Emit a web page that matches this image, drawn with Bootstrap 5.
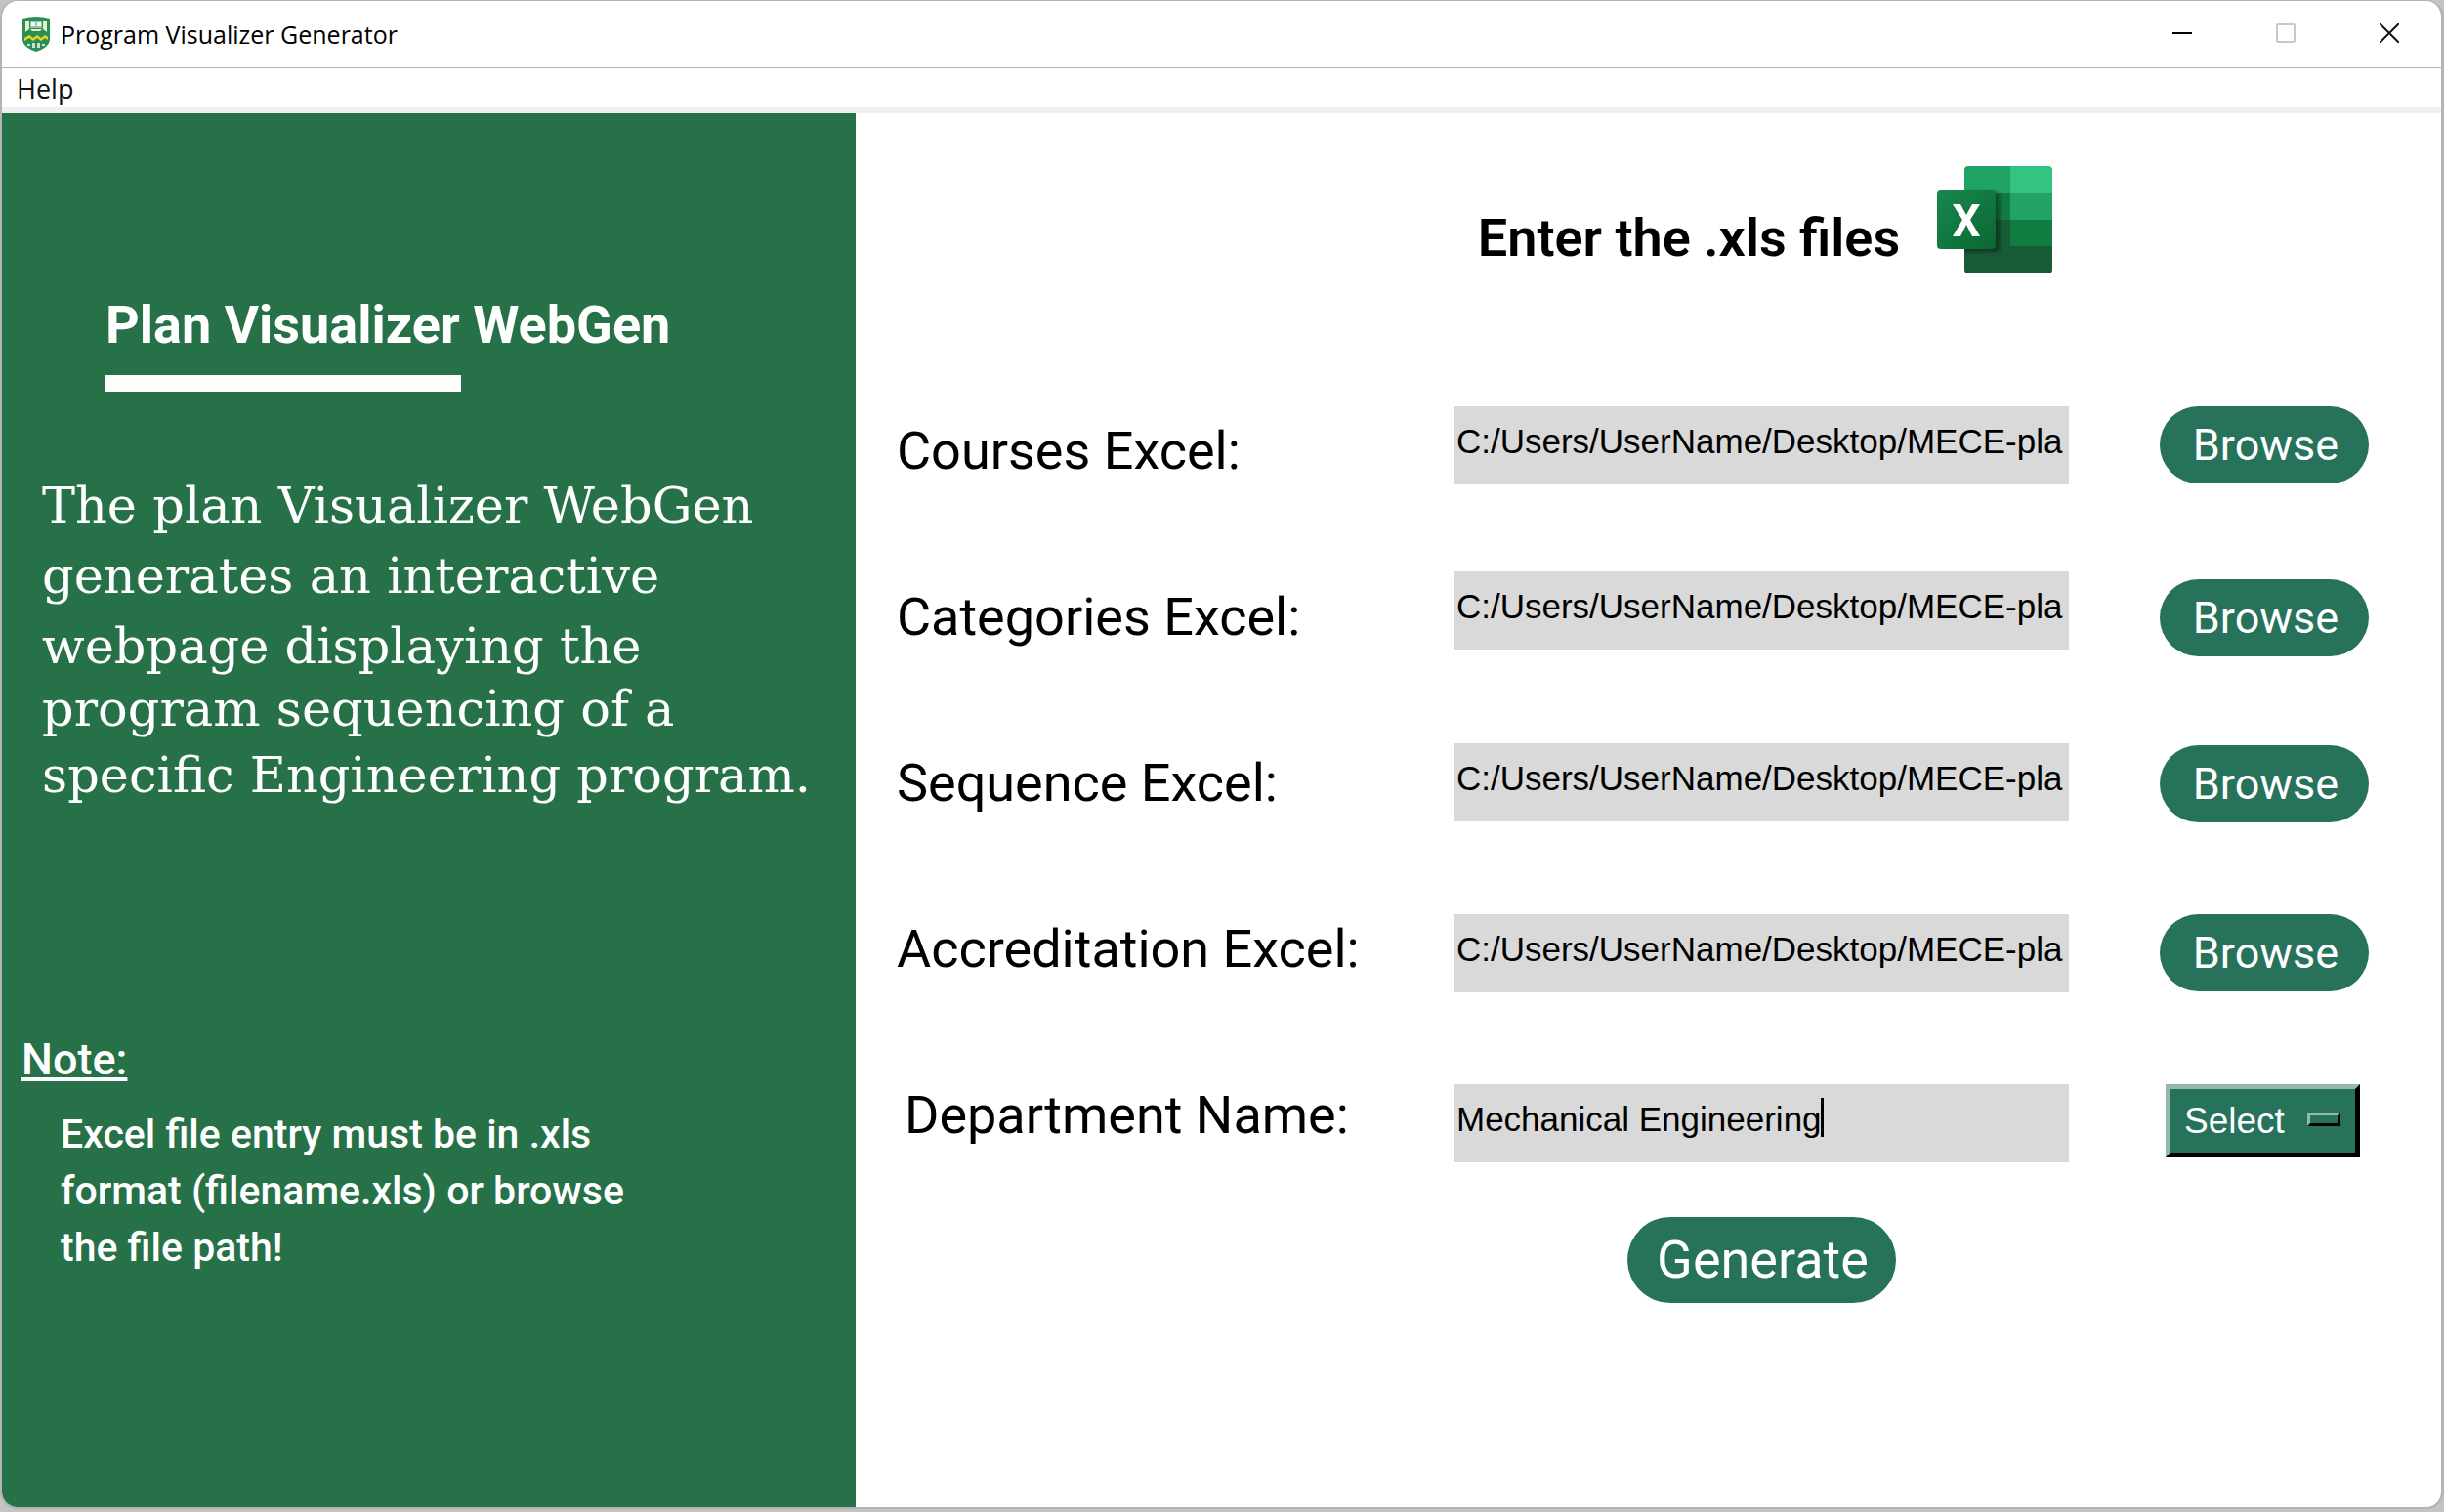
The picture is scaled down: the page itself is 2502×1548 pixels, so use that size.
<!DOCTYPE html>
<html lang="en">
<head>
<meta charset="utf-8">
<meta name="viewport" content="width=device-width, initial-scale=1">
<title>Program Visualizer Generator</title>
<link href="https://cdn.jsdelivr.net/npm/bootstrap@5.3.0/dist/css/bootstrap.min.css" rel="stylesheet">
<script src="https://cdn.jsdelivr.net/npm/bootstrap@5.3.0/dist/js/bootstrap.bundle.min.js"></script>
<style>
  :root { --panel: #277149; --action: #27725b; --field: #d9d9d9; }
  body { background: #c4c4c4; font-family: Roboto, "Liberation Sans", sans-serif; color: #000; }
  .app-window { min-height: calc(100vh - 3px); border: solid #b4b4b4; border-width: 1px 3px 2px 2px; border-radius: 18px; overflow: hidden; background: #fff; }
  .title-bar { height: 68px; font: 25px/68px "Open Sans", sans-serif; padding-left: 20px; gap: 10px; }
  .title-bar button { width: 106px; height: 62px; }
  .menu-strip { height: 47px; border-top: 1px solid #b4b4b4; border-bottom: 6px solid #f0f0f0; padding-left: 15px; }
  .menu-strip a { font: 27px/42px "Open Sans", sans-serif; color: #111; }
  .side-panel { width: 35%; background: var(--panel); color: #fff; }
  .side-title { font-size: 54px; line-height: 64px; font-weight: 700; margin: 185px 0 0 106px; }
  .side-rule { width: 364px; height: 17px; margin: 19px 0 0 106px; background: #fffdfb; }
  .intro { font-family: "DejaVu Serif", serif; font-size: 51px; margin: 81px 0 0 41px; }
  .intro-top { line-height: 72px; }
  .intro-end { line-height: 68px; margin-top: -6px; }
  .note-head { font-size: 45px; line-height: 52px; font-weight: 500; margin: 231px 0 0 20px; }
  .note-body { font-size: 41px; line-height: 58px; font-weight: 500; margin: 21px 0 0 60px; }
  .work-grid { display: grid; grid-template-columns: minmax(0, 1fr) 630px 214px; column-gap: 93px; padding: 54px 74px 0 42px; align-content: start; }
  .mid { grid-column: 2; gap: 38px; }
  .work-title { font-size: 54px; line-height: 64px; font-weight: 600; padding-top: 42px; }
  .stack { display: grid; margin-top: 136px; align-content: start; justify-items: start; }
  .labels { grid-column: 1; grid-template-rows: repeat(5, 170px); padding-top: 14px; }
  .labels label { font-size: 54px; line-height: 64px; }
  .fields { grid-template-rows: 169px 176px 175px 174px 80px; justify-items: stretch; }
  .fields input { height: 80px; border: 0; border-radius: 0; background: var(--field); font: 35px/46px "Liberation Sans", sans-serif; padding: 0 2px 8px 3px; color: #000; }
  .fields input:focus { background: var(--field); box-shadow: none; color: #000; }
  .text-caret { left: 376px; top: 14px; width: 3px; height: 40px; background: #000; }
  .actions { grid-template-rows: 177px 170px 173px 174px 75px; }
  .pill { background: var(--action); color: #fff; border-radius: 50px; padding: 0 0 0 3px; }
  .pill-sm { width: 214px; height: 79px; font-size: 45px; }
  .pill-lg { width: 275px; height: 88px; font-size: 54px; line-height: 64px; margin-top: 56px; }
  .picker select { appearance: none; width: 199px; height: 75px; margin-left: 6px; border: 5px solid; border-color: #93b8ad #000 #000 #93b8ad; border-radius: 0; background: var(--action); color: #fff; font: 37px/46px "Liberation Sans", sans-serif; padding: 0 0 0 14px; }
  .picker i { left: 151px; top: 29px; width: 34px; height: 14px; border: 3px solid; border-color: #93b8ad #000 #000 #93b8ad; pointer-events: none; }
</style>
</head>
<body>
<div class="app-window d-flex flex-column">
  <header class="title-bar d-flex align-items-center">
    <svg width="30" height="36" viewBox="0 0 30 36" aria-hidden="true">
      <path d="M1 2Q15-2 29 2V24Q28 32 15 36Q2 32 1 24Z" fill="#2a8f57"/>
      <path d="M4 4H8V13L4 16ZM22 4H26V16L22 13Z" fill="#e3efc6"/>
      <path d="M9 5H21V12H9Z" fill="#8fcbaa"/><path d="M10 6H14V10H10ZM16 6H20V10H16Z" fill="#f2faf5"/>
      <path d="M9 13H21L19 15H11Z" fill="#e3efc6"/>
      <path d="M3 22L8 19L12 22L16 19L20 22L24 19L27 21V24L24 22L20 25L16 22L12 25L8 22L3 25Z" fill="#f2d21c"/>
      <path d="M6 28H9V30H6ZM11 27H14V32H11ZM16 27H19V32H16ZM21 28H24V30H21Z" fill="#c5e3cf"/>
    </svg>
    <span>Program Visualizer Generator</span>
    <div class="ms-auto d-flex align-self-start">
      <button class="btn p-0 border-0" aria-label="Minimize"><svg width="20" height="20" viewBox="0 0 20 20"><path d="M0 10H20" stroke="#000" stroke-width="2"/></svg></button>
      <button class="btn p-0 border-0" aria-label="Maximize"><svg width="20" height="20" viewBox="0 0 20 20"><rect x="1" y="1" width="18" height="18" rx="1" fill="none" stroke="#c8c8c8" stroke-width="2"/></svg></button>
      <button class="btn p-0 border-0" aria-label="Close"><svg width="20" height="20" viewBox="0 0 20 20"><path d="M0 0L20 20M20 0L0 20" stroke="#111" stroke-width="2"/></svg></button>
    </div>
  </header>
  <nav class="menu-strip d-flex"><a class="text-decoration-none" href="#">Help</a></nav>
  <main class="d-flex flex-grow-1">
    <aside class="side-panel flex-shrink-0">
      <h1 class="side-title mb-0">Plan Visualizer WebGen</h1>
      <div class="side-rule"></div>
      <div class="intro">
        <div class="intro-top">The plan Visualizer WebGen<br>generates an interactive<br>webpage displaying the</div>
        <div class="intro-end">program sequencing of a<br>specific Engineering program.</div>
      </div>
      <h2 class="note-head mb-0 text-decoration-underline">Note:</h2>
      <p class="note-body mb-0">Excel file entry must be in .xls<br>format (filename.xls) or browse<br>the file path!</p>
    </aside>
    <form class="work-grid flex-grow-1">
      <div class="mid d-flex justify-content-center ps-2">
        <h2 class="work-title mb-0 text-nowrap">Enter the .xls files</h2>
        <svg class="flex-shrink-0" width="118" height="110" viewBox="0 0 118 110" aria-hidden="true">
          <defs>
            <clipPath id="sheet"><rect x="28" width="90" height="110" rx="4"/></clipPath>
            <linearGradient id="tile" x1="0" y1="0" x2="1" y2="1"><stop offset="0" stop-color="#18884f"/><stop offset="1" stop-color="#0b6631"/></linearGradient>
            <filter id="soft" x="-20%" y="-20%" width="140%" height="140%"><feGaussianBlur stdDeviation="2"/></filter>
          </defs>
          <g clip-path="url(#sheet)">
            <path d="M28 0H75V28H28Z" fill="#21a366"/><path d="M75 0H118V28H75Z" fill="#33c481"/>
            <path d="M28 28H75V55H28Z" fill="#107c41"/><path d="M75 28H118V55H75Z" fill="#21a366"/>
            <path d="M28 55H118V110H28Z" fill="#185c37"/><path d="M75 55H118V82H75Z" fill="#107c41"/>
            <rect x="4" y="27" width="60" height="61" rx="4" fill="#000" opacity=".4" filter="url(#soft)"/>
          </g>
          <rect y="25" width="60" height="60" rx="4" fill="url(#tile)"/>
          <path d="M16 39H24L30 50L36 39H44L34 55L44 72H36L30 60L24 72H16L26 55Z" fill="#fff"/>
        </svg>
      </div>
      <div class="stack labels">
        <label for="courses">Courses Excel:</label>
        <label for="categories">Categories Excel:</label>
        <label for="sequence">Sequence Excel:</label>
        <label for="accreditation">Accreditation Excel:</label>
        <label for="department" class="ps-2">Department Name:</label>
      </div>
      <div class="stack fields">
        <input class="form-control" id="courses" type="text" value="C:/Users/UserName/Desktop/MECE-pla">
        <input class="form-control" id="categories" type="text" value="C:/Users/UserName/Desktop/MECE-pla">
        <input class="form-control" id="sequence" type="text" value="C:/Users/UserName/Desktop/MECE-pla">
        <input class="form-control" id="accreditation" type="text" value="C:/Users/UserName/Desktop/MECE-pla">
        <div class="position-relative">
          <input class="form-control" id="department" type="text" value="Mechanical Engineering">
          <span class="text-caret position-absolute"></span>
        </div>
        <button class="btn pill pill-lg mx-auto" type="button">Generate</button>
      </div>
      <div class="stack actions">
        <button class="btn pill pill-sm" type="button">Browse</button>
        <button class="btn pill pill-sm" type="button">Browse</button>
        <button class="btn pill pill-sm" type="button">Browse</button>
        <button class="btn pill pill-sm" type="button">Browse</button>
        <div class="picker position-relative"><select aria-label="Select department"><option>Select</option></select><i class="position-absolute"></i></div>
      </div>
    </form>
  </main>
</div>
</body>
</html>
